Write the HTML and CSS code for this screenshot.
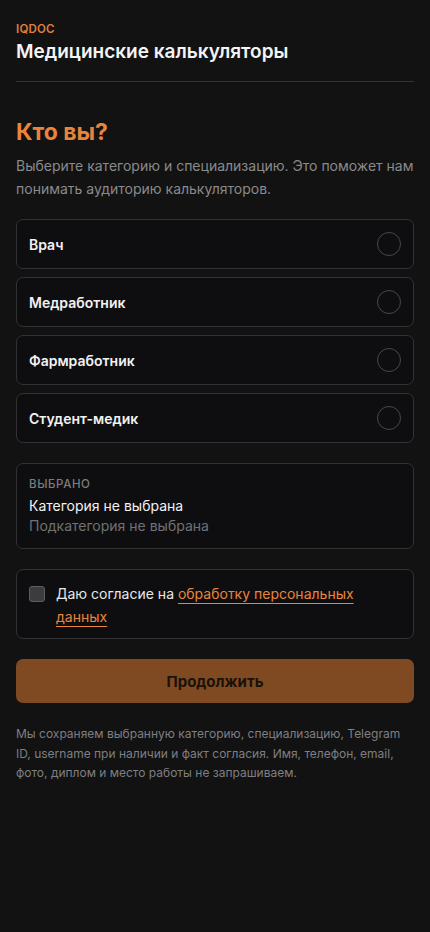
FILE: index.html
```html
<!DOCTYPE html>
<html lang="ru">
<head>
    <meta charset="UTF-8">
    <title>IQDOC - Медицинские калькуляторы</title>
    <link rel="stylesheet" href="styles.css">
</head>

<body>
    <div class="page">
        <!-- 상단 헤더 -->
        <header class="head">
            <p class="brand">IQDOC</p>
            <h1 class="head-title">Медицинские калькуляторы</h1>
        </header>

        <main class="who">
            <h2 class="who-title">Кто вы?</h2>
            <p class="who-desc">Выберите категорию и специализацию. Это поможет нам понимать аудиторию калькуляторов.</p>

            <ul class="roles">
                <li class="role">
                    <span>Врач</span>
                    <i class="radio"></i>
                </li>
                <li class="role">
                    <span>Медработник</span>
                    <i class="radio"></i>
                </li>
                <li class="role">
                    <span>Фармработник</span>
                    <i class="radio"></i>
                </li>
                <li class="role">
                    <span>Студент-медик</span>
                    <i class="radio"></i>
                </li>
            </ul>

            <div class="picked">
                <p class="picked-label">Выбрано</p>
                <p class="picked-cat">Категория не выбрана</p>
                <p class="picked-sub">Подкатегория не выбрана</p>
            </div>

            <label class="consent">
                <i class="check"></i>
                <span>Даю согласие на <a href="">обработку персональных данных</a></span>
            </label>

            <button class="next" type="button">Продолжить</button>

            <p class="note">Мы сохраняем выбранную категорию, специализацию, Telegram ID, username при наличии и факт согласия. Имя, телефон, email, фото, диплом и место работы не запрашиваем.</p>
        </main>
    </div>
</body></html>
```

FILE: styles.css
```css
html,
body {
    margin: 0;
    padding: 0;
}

body {
    background-color: #121212;
    color: #f2f2f2;
    font-family: Inter, "Noto Sans", sans-serif;
}

p,
h1,
h2,
ul {
    margin: 0;
    padding: 0;
}

ul {
    list-style: none;
}

.page {
    padding: 22px 16px 40px;
}

/*헤더*/
.head {
    padding-bottom: 16px;
    border-bottom: 1px solid #333336;
}

.brand {
    color: #e0803a;
    font: 600 11.5px/14px Inter, sans-serif;
    letter-spacing: .2px;
}

.head-title {
    margin-top: 3px;
    font: 600 19px/26px Inter, sans-serif;
    color: #f4f4f4;
}

/*본문*/
.who {
    padding-top: 34px;
}

.who-title {
    color: #e8843c;
    font: 700 23px/32px Inter, sans-serif;
}

.who-desc {
    margin-top: 6px;
    color: #8a8a8c;
    font-size: 14px;
    line-height: 23px;
}

.roles {
    display: flex;
    flex-direction: column;
    gap: 8px;
    margin-top: 19px;
}

.role {
    display: flex;
    justify-content: space-between;
    align-items: center;
    height: 48px;
    padding: 0 12px;
    border: 1px solid #323235;
    border-radius: 7px;
    background-color: #0e0e10;
    font: 600 14px Inter, sans-serif;
    color: #f2f2f2;
}

.radio {
    width: 22px;
    height: 22px;
    border: 1px solid #48484b;
    border-radius: 50%;
}

/*선택 박스*/
.picked {
    margin-top: 20px;
    padding: 12px;
    border: 1px solid #323235;
    border-radius: 7px;
    background-color: #0e0e10;
}

.picked-label {
    color: #7d7d80;
    font: 500 11.5px/16px Inter, sans-serif;
    text-transform: uppercase;
    letter-spacing: .6px;
}

.picked-cat {
    margin-top: 4px;
    font-size: 14px;
    line-height: 20px;
    color: #f2f2f2;
}

.picked-sub {
    font-size: 14px;
    line-height: 20px;
    color: #717174;
}

/*동의*/
.consent {
    display: flex;
    align-items: flex-start;
    gap: 11px;
    margin-top: 20px;
    padding: 12px 12px 10px;
    border: 1px solid #323235;
    border-radius: 7px;
    background-color: #0e0e10;
    font-size: 14px;
    line-height: 23px;
    color: #e8e8e8;
}

.check {
    flex: none;
    width: 14px;
    height: 14px;
    margin-top: 4px;
    border: 1px solid #5e5e61;
    border-radius: 3px;
    background-color: #3c3c3f;
}

.consent a {
    color: #e8843c;
    text-decoration: underline;
    text-decoration-thickness: 1px;
    text-underline-offset: 4px;
}

/*버튼*/
.next {
    display: block;
    width: 100%;
    height: 44px;
    margin-top: 20px;
    border: 0;
    border-radius: 7px;
    background-color: #7f4a22;
    color: #1a1208;
    font: 700 15px Inter, sans-serif;
}

.note {
    margin-top: 21px;
    color: #7f7f82;
    font-size: 12px;
    line-height: 19.5px;
}
```
